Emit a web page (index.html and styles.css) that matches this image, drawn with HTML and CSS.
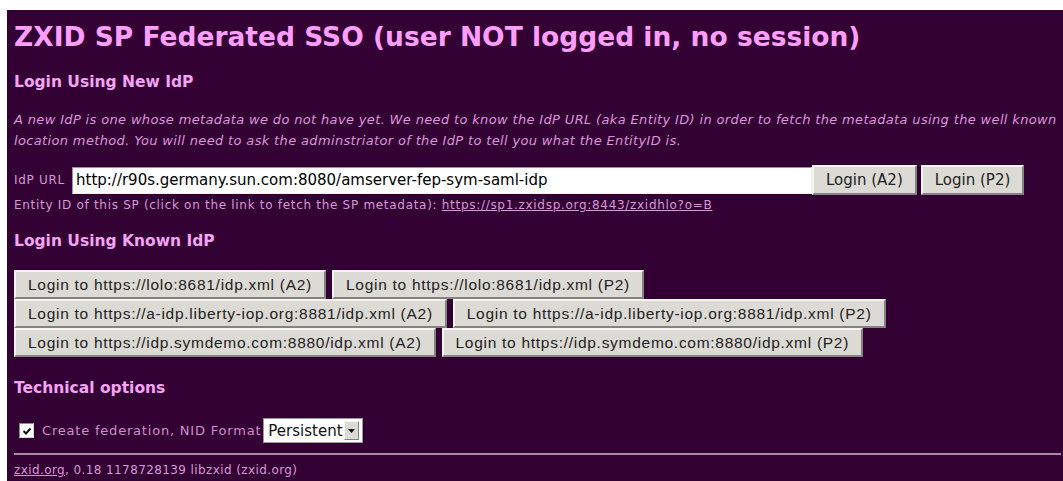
FILE: index.html
```html
<!DOCTYPE html>
<html>
<head>
<meta charset="utf-8">
<title>ZXID SP SSO</title>
<link rel="stylesheet" href="styles.css">
</head>
<body>
<div class="page">
  <h1 class="title">ZXID SP Federated SSO (user NOT logged in, no session)</h1>

  <h3 class="section first">Login Using New IdP</h3>
  <p class="intro">A new IdP is one whose metadata we do not have yet. We need to know the IdP URL (aka Entity ID) in order to fetch the metadata using the well known<br>location method. You will need to ask the adminstriator of the IdP to tell you what the EntityID is.</p>

  <div class="url-row">
    <span class="small url-label">IdP URL</span>
    <input class="url-input" type="text" value="http://r90s.germany.sun.com:8080/amserver-fep-sym-saml-idp">
    <button class="btn btn-main">Login (A2)</button>
    <button class="btn btn-main">Login (P2)</button>
  </div>
  <div class="small entity">Entity ID of this SP (click on the link to fetch the SP metadata): <a href="#">https://sp1.zxidsp.org:8443/zxidhlo?o=B</a></div>

  <h3 class="section known">Login Using Known IdP</h3>
  <div class="idp-list">
    <div class="idp-row">
      <button class="btn btn-idp">Login to https://lolo:8681/idp.xml (A2)</button>
      <button class="btn btn-idp">Login to https://lolo:8681/idp.xml (P2)</button>
    </div>
    <div class="idp-row">
      <button class="btn btn-idp">Login to https://a-idp.liberty-iop.org:8881/idp.xml (A2)</button>
      <button class="btn btn-idp">Login to https://a-idp.liberty-iop.org:8881/idp.xml (P2)</button>
    </div>
    <div class="idp-row">
      <button class="btn btn-idp">Login to https://idp.symdemo.com:8880/idp.xml (A2)</button>
      <button class="btn btn-idp">Login to https://idp.symdemo.com:8880/idp.xml (P2)</button>
    </div>
  </div>

  <h3 class="section tech">Technical options</h3>
  <div class="opt-row">
    <span class="check"><svg width="10" height="8" viewBox="0 0 10 8"><path d="M1.5 4 L4 6.5 L8.5 1.5" fill="none" stroke="#111" stroke-width="2"/></svg></span>
    <span class="opt-label">Create federation, NID Format</span>
    <span class="select"><span class="select-val">Persistent</span><span class="select-arrow"><svg width="7" height="4" viewBox="0 0 7 4"><path d="M0 0 H7 L3.5 4 Z" fill="#111"/></svg></span></span>
  </div>
  <hr class="rule">
  <div class="footer"><a href="#">zxid.org</a>, 0.18 1178728139 libzxid (zxid.org)</div>
</div>
</body>
</html>
```

FILE: styles.css
```css
html, body {
  margin: 0;
  padding: 0;
  background: #ffffff;
}

.page {
  margin: 10px 0 0 7px;
  padding: 1px 2px 20px 7px;
  background: #330033;
  min-height: 471px;
  box-sizing: border-box;
  font-family: "DejaVu Sans", sans-serif;
  color: #d898d8;
}

.title {
  margin: 8px 0 0 0;
  font-size: 26.5px;
  font-weight: bold;
  color: #ff9eff;
  line-height: 36px;
  white-space: nowrap;
}

.section {
  margin: 0;
  font-size: 15.5px;
  font-weight: bold;
  color: #f4a4f4;
  line-height: 20px;
}

.first {
  margin-top: 17px;
}

.intro {
  margin: 17px 0 0 0;
  font-size: 13px;
  font-style: italic;
  line-height: 21px;
  color: #dd95dd;
  letter-spacing: 0.35px;
  white-space: nowrap;
}

.url-row {
  display: flex;
  align-items: center;
  margin-top: 14px;
  height: 30px;
}

.small {
  font-size: 12px;
  letter-spacing: 0.7px;
  color: #d699d6;
}

.url-label {
  width: 58px;
  flex: none;
}

.url-input {
  width: 740px;
  height: 27px;
  box-sizing: border-box;
  border: 1px solid #9a929a;
  border-right-color: #eeeeee;
  border-bottom-color: #eeeeee;
  background: #ffffff;
  padding: 0 3px;
  font-family: "DejaVu Sans", sans-serif;
  font-size: 15px;
  color: #000;
  outline: none;
}

.btn {
  font-family: "DejaVu Sans", sans-serif;
  font-size: 15px;
  color: #222;
  background: #dcdad5;
  border: 2px solid;
  border-color: #f6f5f2 #858380 #858380 #f6f5f2;
  height: 30px;
  padding: 0 12px;
  margin: 0;
}

.btn-main + .btn-main {
  margin-left: 4px;
}

.entity {
  margin-top: 2px;
  line-height: 16px;
}

.entity a, .footer a {
  color: inherit;
  text-decoration: underline;
}

.known {
  margin-top: 18px;
}

.idp-list {
  display: flex;
  flex-direction: column;
  margin-top: 19px;
}

.idp-row {
  display: flex;
  gap: 6px;
}

.btn-idp {
  font-family: "Liberation Sans", sans-serif;
  font-size: 15.5px;
  letter-spacing: 0.72px;
  height: 29px;
  padding: 0 12px;
}

.tech {
  margin-top: 21px;
}

.opt-row {
  display: flex;
  align-items: center;
  margin-top: 20px;
  height: 25px;
  padding-left: 5px;
}

.check {
  width: 15px;
  height: 15px;
  box-sizing: border-box;
  background: #fff;
  border: 1px solid #8a8a8a;
  border-right-color: #d8d8d8;
  border-bottom-color: #d8d8d8;
  display: flex;
  align-items: center;
  justify-content: center;
}

.opt-label {
  font-size: 13px;
  letter-spacing: 0.8px;
  margin-left: 8px;
  margin-right: 2px;
  color: #cf8fcf;
}

.select {
  display: inline-flex;
  align-items: center;
  height: 25px;
  box-sizing: border-box;
  width: 100px;
  background: #fff;
  padding-left: 4px;
  border: 1px solid #999;
  font-size: 15px;
  color: #111;
}

.select-val {
  flex: 1;
}

.select-arrow {
  width: 13px;
  height: 17px;
  margin-right: 3px;
  background: #dcdad5;
  border: 1px solid;
  border-color: #f6f5f2 #858380 #858380 #f6f5f2;
  display: flex;
  align-items: center;
  justify-content: center;
}

.rule {
  margin: 10px 0 0 0;
  border: 0;
  border-top: 2px solid #a88ca8;
  height: 0;
}

.footer {
  margin-top: 8px;
  font-size: 12px;
  letter-spacing: 0.4px;
  line-height: 14px;
  color: #d699d6;
}
```
